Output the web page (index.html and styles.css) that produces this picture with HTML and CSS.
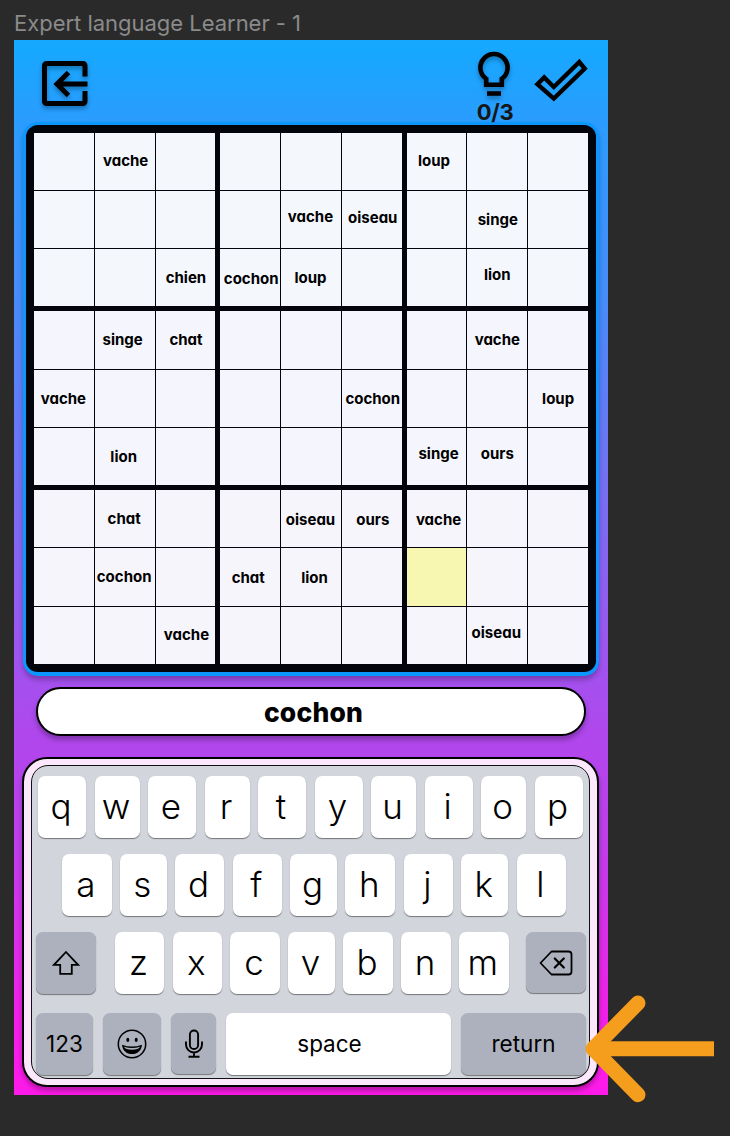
FILE: index.html
```
<!DOCTYPE html>
<html lang="fr">
<head>
<meta charset="utf-8">
<title>Expert language Learner - 1</title>
<link rel="stylesheet" href="styles.css">
</head>
<body>
<h1 class="frame-title">Expert language Learner - 1</h1>
<main class="frame">
  <header class="toolbar">
    <svg class="exit" width="46" height="46" viewBox="0 0 46 46" fill="none" stroke="#000" stroke-width="5"><path d="M43 15.5V4.5a2 2 0 0 0-2-2H4.5a2 2 0 0 0-2 2v36a2 2 0 0 0 2 2H41a2 2 0 0 0 2-2V30"/><path d="M45.5 23H15M26.500 11.500L15 23l11.500 11.500"/></svg>
    <div class="hint">
      <svg width="34" height="46" viewBox="0 0 34 46" fill="none" stroke="#000" stroke-width="4.600"><path d="M9.200 33.700V27.800A13.600 13.600 0 1 1 24.800 27.800V33.700Z"/><path d="M10 42.500h14"/></svg>
      <span class="count">0/3</span>
    </div>
    <svg class="check" width="56" height="48" viewBox="0 0 56 48" fill="none" stroke="#000" stroke-width="4.400"><path d="M4.400 26.200L11.200 19.400 20.800 29 46.300 4 51.700 10.500 20.800 40.600Z"/></svg>
  </header>
  <section class="board" id="board"></section>
  <div class="answer">cochon</div>
  <section class="keyboard">
    <div class="keys">
      <div class="row row1"><b>q</b><b>w</b><b>e</b><b>r</b><b>t</b><b>y</b><b>u</b><b>i</b><b>o</b><b>p</b></div>
      <div class="row row2"><b>a</b><b>s</b><b>d</b><b>f</b><b>g</b><b>h</b><b>j</b><b>k</b><b>l</b></div>
      <div class="row row3">
        <b class="dark"><svg width="28" height="26" viewBox="0 0 28 26" fill="none" stroke="#000" stroke-width="1.800"><path d="M14 2L26 14.800H19.800V23.800H8.200V14.800H2Z"/></svg></b>
        <b>z</b><b>x</b><b>c</b><b>v</b><b>b</b><b>n</b><b>m</b>
        <b class="dark short"><svg width="34" height="26" viewBox="0 0 34 26" fill="none" stroke="#000" stroke-width="1.800" stroke-linejoin="round" stroke-linecap="round"><path d="M12.500 1.500H29.500a3 3 0 0 1 3 3V21.500a3 3 0 0 1-3 3H12.500L1.500 13Z"/><path stroke-width="2.200" d="M15.800 8.500l9 9M24.800 8.500l-9 9"/></svg></b>
      </div>
      <div class="row row4">
        <b class="dark label">123</b>
        <b class="dark"><svg width="30" height="30" viewBox="0 0 30 30"><circle cx="15" cy="15" r="13.700" fill="none" stroke="#000" stroke-width="1.500"/><ellipse cx="10.800" cy="10.900" rx="1.500" ry="2.100"/><ellipse cx="19.200" cy="10.900" rx="1.500" ry="2.100"/><path d="M5 15.700Q15 19.500 25 15.700C24.500 21.500 20.500 25 15 25S5.500 21.500 5 15.700Z"/><path d="M7 17.700Q15 20.500 23 17.700Q22 20.500 15 20.700Q8 20.500 7 17.700Z" fill="#adb1bd"/></svg></b>
        <b class="dark short"><svg width="20" height="30" viewBox="0 0 20 30" fill="none" stroke="#000" stroke-width="1.900"><rect x="5.900" y="1.500" width="8.200" height="18.500" rx="4.100"/><path d="M2 12.500V15.500a8 8 0 0 0 16 0V12.500M10 23.500V27.700M4.500 27.800h11"/></svg></b>
        <b class="label space">space</b>
        <b class="dark label">return</b>
      </div>
    </div>
  </section>
  <svg class="pointer" width="130" height="108" viewBox="0 0 130 108" fill="none" stroke="#f59d1d" stroke-width="15"><path d="M129 53.700H12"/><path stroke-linecap="round" stroke-linejoin="round" d="M53 8L8 53.700 53 99.700"/></svg>
</main>
<script src="board.js"></script>
</body>
</html>
```
FILE: styles.css
```
body {
  margin: 0;
  height: 1136px;
  overflow: hidden;
  background: #2a2a2a;
  font-family: Inter, "Liberation Sans", sans-serif;
  color: #000;
}
.frame-title {
  margin: 0;
  padding: 9px 0 0 14px;
  height: 31px;
  line-height: 28px;
  font-size: 22px;
  font-weight: 400;
  letter-spacing: -0.02px;
  color: #8b8b8b;
}
.frame {
  position: relative;
  box-sizing: border-box;
  width: 594px;
  height: 1055px;
  margin-left: 14px;
  padding-left: 8px;
  background: linear-gradient(#14a9ff 0, #2b9cff 8%, #488bfb 25%, #7470f4 42%, #9b57ef 57%, #b047ed 66%, #c13ceb 77%, #f120e9 92%, #ff1ae9 100%);
}
.toolbar {
  display: flex;
  height: 82px;
}
.exit, .hint svg {
  filter: drop-shadow(0 3px 2px rgba(0, 0, 0, 0.3));
}
.exit { margin: 21px 0 0 20px; overflow: visible; }
.hint {
  display: flex;
  flex-direction: column;
  align-items: center;
  width: 50px;
  margin: 11px 0 0 381px;
}
.hint svg { overflow: visible; flex: none; }
.count {
  font-size: 22px;
  line-height: 26px;
  margin-top: 2px;
  margin-left: 2px;
  font-weight: 700;
  letter-spacing: -0.3px;
  color: #161616;
}
.check { margin: 18px 0 0 14px; }
.board {
  box-sizing: border-box;
  width: 576px;
  height: 553.5px;
  margin-left: 1px;
  padding: 7.500px 8px;
  border: 4px solid #0c97ff;
  border-width: 3.500px 3px 4.500px;
  border-radius: 15px;
  background: #03040c;
  box-shadow: 0 4px 5px rgba(0, 0, 0, 0.25);
  display: grid;
  grid-template: repeat(3, 1fr) / repeat(3, 1fr);
  gap: 5px;
}
.box {
  display: grid;
  grid-template: repeat(3, minmax(0, 1fr)) / repeat(3, minmax(0, 1fr));
  gap: 1px;
}
.cell {
  display: flex;
  align-items: center;
  justify-content: center;
  background: #f4f8fd;
  font-size: 15px;
  font-weight: 700;
  font-feature-settings: "cv11";
}
.tint1 { background: #f5f6fd; }
.tint2 { background: #f6f5fb; }
.selected { background: #f7f7b2; }
.answer {
  box-sizing: border-box;
  width: 550px;
  height: 49px;
  margin: 11.500px 0 0 14px;
  border: 2px solid #000;
  border-radius: 25px;
  background: #fff;
  box-shadow: 0 4px 5px rgba(0, 0, 0, 0.28);
  text-align: center;
  line-height: 46px;
  padding-left: 5px;
  font-size: 26.500px;
  letter-spacing: 0.2px;
  font-weight: 800;
  font-feature-settings: "cv11";
}
.keyboard {
  box-sizing: border-box;
  width: 577px;
  height: 330px;
  margin-top: 21px;
  padding: 6px 7px;
  border: 2px solid #000;
  border-radius: 25px;
  background: #fbe8fd;
  box-shadow: 0 4px 5px rgba(0, 0, 0, 0.28);
}
.keys {
  box-sizing: border-box;
  height: 314px;
  border: 1px solid #111;
  border-radius: 17px;
  background: #d2d5dc;
  padding: 10px 0 0 4px;
}
.row {
  display: grid;
  height: 62px;
  margin-bottom: 16px;
  justify-content: start;
}
.row1 { grid-template-columns: 48px 45px 48px 45px 48px 48px 45px 48px 45px 48px; column-gap: 8.500px; padding-left: 2px; }
.row2 { grid-template-columns: 49.500px 47px 49.500px 49.500px 46.500px 50.500px 49.500px 47px 49.500px; column-gap: 8.200px; padding-left: 26px; }
.row3 { grid-template-columns: 60px 49.500px 49.500px 49.500px 46.500px 50px 49.500px 49.500px 60px; column-gap: 8.300px; }
.row3 b:nth-child(n+2):nth-child(-n+8) { margin-left: 10.500px; margin-right: -10.500px; }
.row3 b:last-child { margin-left: 19.500px; margin-right: -19.500px; }
.row4 { grid-template-columns: 57px 58px 45px 225px 125px; column-gap: 10px; margin-top: 19px; }
.row b {
  display: flex;
  align-items: center;
  justify-content: center;
  height: 62px;
  border-radius: 7px;
  background: #fff;
  box-shadow: 0 1px 1px rgba(0, 0, 0, 0.45);
  box-sizing: border-box;
  padding: 0 2px 3px 0;
  font-size: 35px;
  font-weight: 300;
}
.row .dark { background: #adb1bd; padding: 0; }
.row .short { height: 61px; }
.row .label { font-size: 22.500px; font-weight: 400; padding: 0 0 1px; }
.row .space { padding-right: 18px; }
.pointer {
  position: absolute;
  left: 570.500px;
  top: 955px;
}
```
FILE: board.js
```
// [row, column, word, horizontal nudge, vertical nudge]
const clues = [
  [0, 1, 'vache', 1, -1], [0, 6, 'loup', -2.5, -1],
  [1, 4, 'vache', -0.5, -3], [1, 5, 'oiseau', 1, -2], [1, 7, 'singe', 0.5, 0],
  [2, 2, 'chien', 0.5, 0], [2, 3, 'cochon', 1, 1], [2, 4, 'loup', -0.5, 0], [2, 7, 'lion', 0, -3],
  [3, 1, 'singe', -2, 0], [3, 2, 'chat', 0.5, 0], [3, 7, 'vache', 0, 0],
  [4, 0, 'vache', -0.5, 0], [4, 5, 'cochon', 1, 0], [4, 8, 'loup', 0, 0],
  [5, 1, 'lion', -1, -0.5], [5, 6, 'singe', 2, -3], [5, 7, 'ours', 0, -3],
  [6, 1, 'chat', -0.5, 0], [6, 4, 'oiseau', -0.5, 1], [6, 5, 'ours', 1, 1], [6, 6, 'vache', 2, 1],
  [7, 1, 'cochon', -0.5, -1], [7, 3, 'chat', -2, 0], [7, 4, 'lion', 3.500, 0],
  [8, 2, 'vache', 1, -1.500], [8, 7, 'oiseau', -1, -3]
];
const board = document.getElementById('board');
for (let b = 0; b < 9; b++) {
  const box = document.createElement('div');
  box.className = 'box';
  for (let c = 0; c < 9; c++) {
    const row = Math.floor(b / 3) * 3 + Math.floor(c / 3);
    const col = (b % 3) * 3 + c % 3;
    const cell = document.createElement('div');
    cell.className = 'cell tint' + Math.floor(row / 3);
    if (row === 7 && col === 6) cell.classList.add('selected');
    const clue = clues.find(k => k[0] === row && k[1] === col);
    if (clue) {
      const word = document.createElement('span');
      word.textContent = clue[2];
      word.style.transform = `translate(${clue[3]}px, ${clue[4]}px)`;
      cell.append(word);
    }
    box.append(cell);
  }
  board.append(box);
}
```
